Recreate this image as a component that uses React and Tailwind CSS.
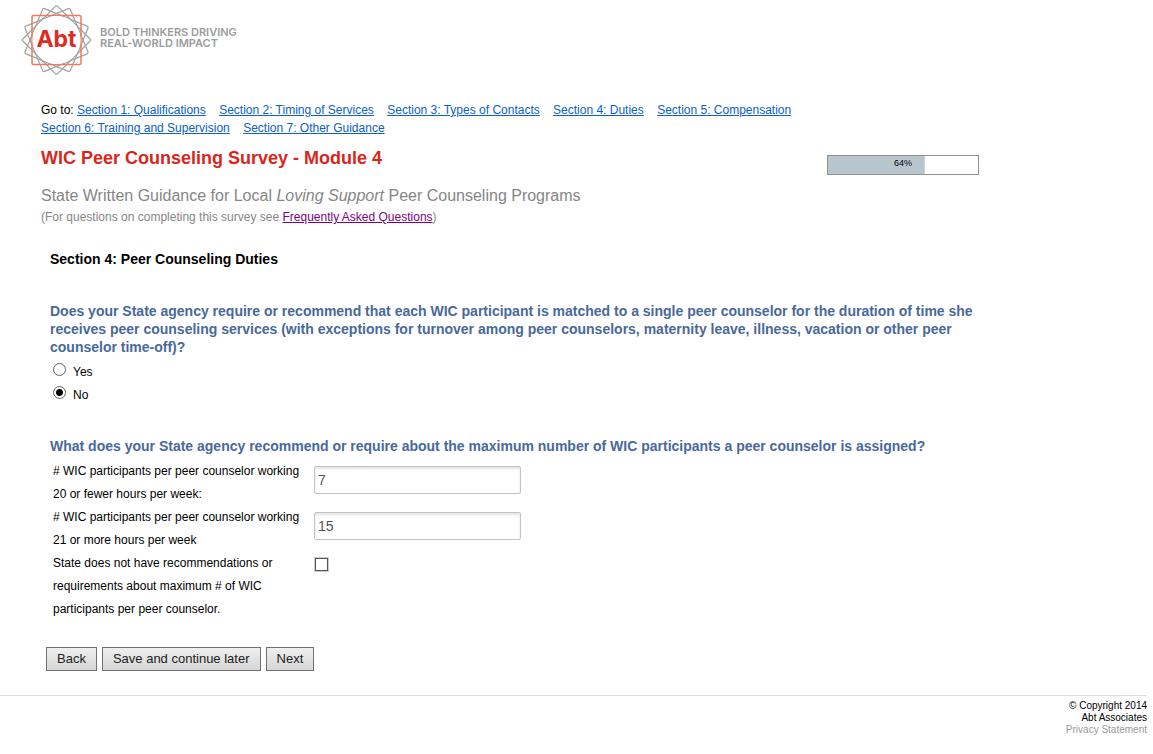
import { useState } from 'react';

const sections = [
  'Section 1: Qualifications',
  'Section 2: Timing of Services',
  'Section 3: Types of Contacts',
  'Section 4: Duties',
  'Section 5: Compensation',
  'Section 6: Training and Supervision',
  'Section 7: Other Guidance',
];

function Logo() {
  return (
    <div className="flex items-center gap-2 pl-[21px] pt-1">
      <svg width="71" height="72" viewBox="-35.5 -36 71 72" fill="none" role="img" aria-label="Abt logo">
        {[22.5, 45, 67.5].map((angle) => (
          <rect
            key={angle}
            x="-24.5"
            y="-24.5"
            width="49"
            height="49"
            rx="1.5"
            stroke="#a3a6a5"
            strokeWidth="1.3"
            transform={`rotate(${angle})`}
          />
        ))}
        <rect x="-24.5" y="-24.5" width="49" height="49" rx="1.5" stroke="#ee7b5c" strokeWidth="1.5" />
        <circle r="24" fill="#fff" />
        <text
          y="7"
          textAnchor="middle"
          fill="#dc2c22"
          className="font-['Inter',sans-serif] text-[23px] font-bold"
        >
          Abt
        </text>
      </svg>
      <p className="pb-1 font-['Inter',sans-serif] text-[11px] leading-[11px] font-semibold text-[#9a9d9c]">
        BOLD THINKERS DRIVING
        <br />
        REAL-WORLD IMPACT
      </p>
    </div>
  );
}

function ProgressBar({ value }) {
  return (
    <div
      role="progressbar"
      aria-label="Survey progress"
      aria-valuenow={value}
      aria-valuemin={0}
      aria-valuemax={100}
      className="relative h-5 w-[152px] border border-[#8e9192] bg-white"
    >
      <div className="box-content h-full border-r border-[#cfd6d9] bg-[#b7c6cd]" style={{ width: `${value}%` }} />
      <span className="absolute inset-x-0 top-0 text-center text-[9px] leading-[14px] text-black">{value}%</span>
    </div>
  );
}

function RadioOption({ id, label, checked, onChange }) {
  return (
    <div className="flex h-[23px] items-center gap-[7px]">
      <input
        type="radio"
        id={id}
        name="matched"
        checked={checked}
        onChange={onChange}
        className="mb-1 size-[13px] appearance-none rounded-full border border-[#606060] bg-white checked:bg-[radial-gradient(circle,#000_3px,#fff_4px)]"
      />
      <label htmlFor={id}>{label}</label>
    </div>
  );
}

function NumberField({ id, label, value, onChange }) {
  return (
    <>
      <label htmlFor={id} className="pr-2">{label}</label>
      <input
        type="text"
        id={id}
        value={value}
        onChange={(e) => onChange(e.target.value)}
        className="mt-[6px] h-7 w-[207px] rounded-xs border border-[#c3c3c3] bg-white px-[3px] text-sm text-[#555] shadow-[inset_0_2px_3px_#e4e4e4]"
      />
    </>
  );
}

function FormButton({ children }) {
  return (
    <button
      type="button"
      className="h-6 border border-[#707070] bg-linear-to-b from-[#efefef] to-[#d6d6d6] px-[10px] text-[13px] leading-5 text-[#222]"
    >
      {children}
    </button>
  );
}

export default function App() {
  const [matched, setMatched] = useState('no');
  const [fewerHours, setFewerHours] = useState('7');
  const [moreHours, setMoreHours] = useState('15');
  const [noLimit, setNoLimit] = useState(false);

  return (
    <div className="bg-white font-['Liberation_Sans',Arial,sans-serif] text-xs text-black">
      <header>
        <Logo />
      </header>

      <main className="max-w-[979px] pl-[41px]">
        <nav className="pt-[25px] leading-[18px]">
          Go to:{' '}
          {sections.map((section) => (
            <span key={section}>
              <a href="#" className="mr-[10px] whitespace-nowrap text-[#0b60c9] underline">{section}</a>{' '}
            </span>
          ))}
        </nav>

        <div className="flex items-start justify-between pt-[9px]">
          <h1 className="text-lg leading-6 font-bold text-[#d9261c]">WIC Peer Counseling Survey - Module 4</h1>
          <div className="pt-[9px]">
            <ProgressBar value={64} />
          </div>
        </div>

        <h2 className="pt-[11px] text-base leading-5 text-[#868686]">
          State Written Guidance for Local <em>Loving Support</em> Peer Counseling Programs
        </h2>
        <p className="pt-[3px] leading-4 text-[#868686]">
          (For questions on completing this survey see{' '}
          <a href="#" className="text-[#800080] underline">Frequently Asked Questions</a>)
        </p>

        <form className="pl-[9px]">
          <h3 className="pt-[25px] text-sm leading-[18px] font-bold">Section 4: Peer Counseling Duties</h3>

          <fieldset className="pt-[34px]">
            <legend className="contents text-sm leading-[18px] font-bold text-[#48699a]">
              Does your State agency require or recommend that each WIC participant is matched to a single peer
              counselor for the duration of time she receives peer counseling services (with exceptions for turnover
              among peer counselors, maternity leave, illness, vacation or other peer counselor time-off)?
            </legend>
            <div className="pt-1 pl-[3px]">
              <RadioOption id="matched-yes" label="Yes" checked={matched === 'yes'} onChange={() => setMatched('yes')} />
              <RadioOption id="matched-no" label="No" checked={matched === 'no'} onChange={() => setMatched('no')} />
            </div>
          </fieldset>

          <h3 className="pt-[31px] text-sm leading-[18px] font-bold text-[#48699a]">
            What does your State agency recommend or require about the maximum number of WIC participants a peer
            counselor is assigned?
          </h3>
          <div className="grid grid-cols-[261px_1fr] items-start pt-[5px] pl-[3px] leading-[23px]">
            <NumberField
              id="fewer-hours"
              label="# WIC participants per peer counselor working 20 or fewer hours per week:"
              value={fewerHours}
              onChange={setFewerHours}
            />
            <NumberField
              id="more-hours"
              label="# WIC participants per peer counselor working 21 or more hours per week"
              value={moreHours}
              onChange={setMoreHours}
            />
            <label htmlFor="no-limit" className="pr-2">
              State does not have recommendations or requirements about maximum # of WIC participants per peer
              counselor.
            </label>
            <input
              type="checkbox"
              id="no-limit"
              checked={noLimit}
              onChange={(e) => setNoLimit(e.target.checked)}
              className="mt-[6px] ml-px size-[13px] appearance-none border border-[#555] bg-white outline outline-[#ccc] checked:bg-[#555]"
            />
          </div>
        </form>

        <div className="flex gap-[5px] pt-[26px] pl-[5px]">
          <FormButton>Back</FormButton>
          <FormButton>Save and continue later</FormButton>
          <FormButton>Next</FormButton>
        </div>
      </main>

      <footer className="mt-6 mr-[6px] border-t border-[#ddd] pt-1 text-right text-[10px] leading-3">
        <p>© Copyright 2014</p>
        <p>Abt Associates</p>
        <p>
          <a href="#" className="text-[#999]">Privacy Statement</a>
        </p>
      </footer>
    </div>
  );
}
